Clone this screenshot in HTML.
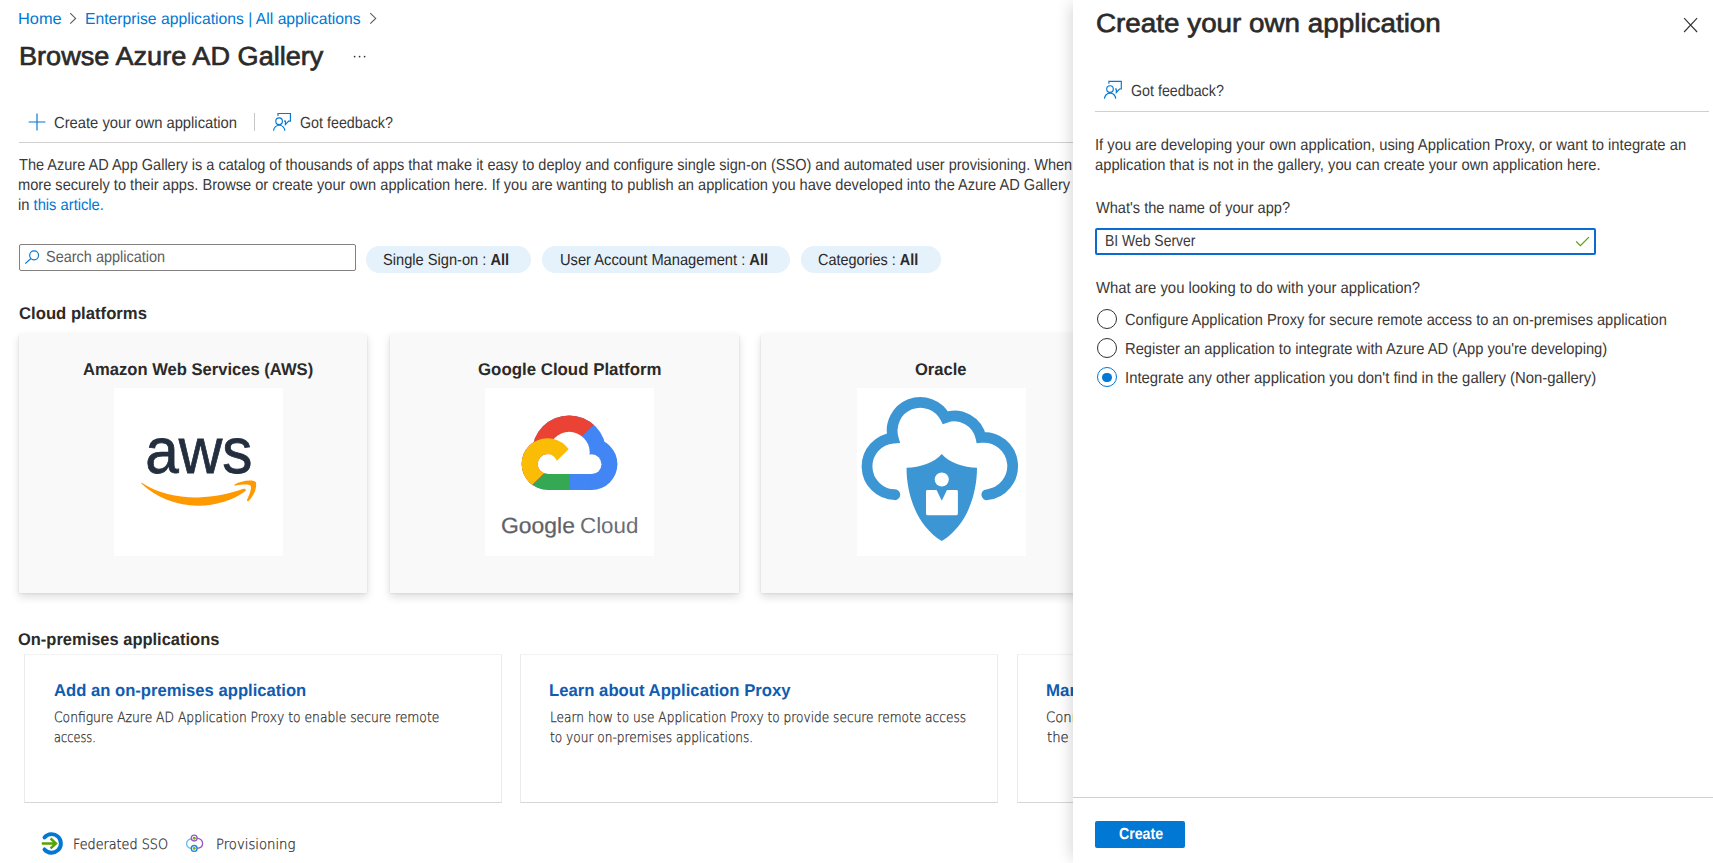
<!DOCTYPE html>
<html lang="en">
<head>
<meta charset="utf-8">
<title>Browse Azure AD Gallery - Microsoft Azure</title>
<style>
*{box-sizing:border-box;margin:0;padding:0}
html,body{width:1713px;height:863px;overflow:hidden;background:#fff}
body{font-family:"Liberation Sans",sans-serif;color:#323130;position:relative}
.t{position:absolute;display:block;height:0;line-height:0;white-space:nowrap;transform-origin:0 0;text-rendering:geometricPrecision;font-weight:400;text-decoration:none}
.t b{font-weight:700}
.abs{position:absolute}
#main{position:absolute;left:0;top:0;width:1713px;height:863px;overflow:hidden}
#panel{position:absolute;left:1073px;top:0;width:640px;height:863px;background:#fff;box-shadow:-6px 0 14px -4px rgba(0,0,0,.16)}
#pwrap{position:absolute;left:-1073px;top:0;width:1713px;height:863px}
.hr{position:absolute;height:1px;background:#d2d0ce}
.pill{position:absolute;top:246px;height:27px;border-radius:13.5px;background:#e5f1fb}
.card{position:absolute;top:334px;height:259px;background:#f9f9f9;box-shadow:0 3.84px 8.64px rgba(0,0,0,.132),0 .72px 2.16px rgba(0,0,0,.108)}
.img{position:absolute;top:54px;width:169px;height:168px;background:#fff}
.ocard{position:absolute;top:654px;height:149px;width:478px;background:#fff;border:1px solid #ebebeb;border-top-color:#f3f3f3;border-bottom-color:#d6d6d6}
svg{position:absolute;overflow:visible}
</style>
</head>
<body>
<div id="main">
  <!-- breadcrumb chevrons -->
  <svg style="left:68px;top:12px" width="10" height="14" viewBox="68 12 10 14"><path d="M70.2 13.1 L75.6 18.4 L70.2 23.7" fill="none" stroke="#605e5c" stroke-width="1.15"/></svg>
  <svg style="left:368px;top:12px" width="10" height="14" viewBox="368 12 10 14"><path d="M370.3 13.1 L375.7 18.4 L370.3 23.7" fill="none" stroke="#605e5c" stroke-width="1.15"/></svg>
  <!-- ellipsis -->
  <svg style="left:352px;top:52px" width="16" height="8" viewBox="352 52 16 8"><g fill="#323130"><circle cx="354.6" cy="56.6" r="0.85"/><circle cx="359.6" cy="56.6" r="0.85"/><circle cx="364.6" cy="56.6" r="0.85"/></g></svg>
  <!-- toolbar -->
  <svg style="left:28px;top:113px" width="18" height="18" viewBox="0 0 18 18"><path d="M9 0.6 V17.4 M0.6 9 H17.4" fill="none" stroke="#0078d4" stroke-width="1.15"/></svg>
  <div class="abs" style="left:254px;top:113px;width:1px;height:18px;background:#c8c6c4"></div>
  <svg style="left:272px;top:112px" width="20" height="20" viewBox="272 112 20 20"><g fill="none" stroke="#0078d4" stroke-width="1.15"><path d="M278 115.9 V113.5 H290.4 V121.1 H288.6 L285.4 124.6 V121.1 H284"/><circle cx="279.1" cy="121.2" r="3.3"/><path d="M273.6 130.8 A5.6 5.6 0 0 1 284.8 130.8"/></g></svg>
  <div class="hr" style="left:19px;top:142px;width:1694px"></div>
  <!-- search -->
  <div class="abs" style="left:19px;top:244px;width:337px;height:27px;border:1px solid #83817f;border-radius:2px;background:#fff"></div>
  <svg style="left:24px;top:249px" width="18" height="18" viewBox="24 249 18 18"><g fill="none" stroke="#0078d4" stroke-width="1.15"><circle cx="34.1" cy="255.35" r="4.45"/><path d="M30.9 258.5 L25.2 263.7"/></g></svg>
  <!-- pills -->
  <div class="pill" style="left:366px;width:165px"></div>
  <div class="pill" style="left:542px;width:248px"></div>
  <div class="pill" style="left:801px;width:140px"></div>
  <!-- cloud cards -->
  <div class="card" style="left:19px;width:348px"><div class="img" style="left:95px"></div></div>
  <div class="card" style="left:390px;width:349px"><div class="img" style="left:95px"></div></div>
  <div class="card" style="left:761px;width:349px"><div class="img" style="left:96px"></div></div>
  <!-- AWS logo -->
  <svg style="left:110px;top:420px" width="180" height="100" viewBox="0 0 1553 863">
    <text x="766" y="456" text-anchor="middle" font-family="Liberation Sans, sans-serif" font-size="560" fill="#232f3e" stroke="#232f3e" stroke-width="7" textLength="925" lengthAdjust="spacingAndGlyphs">aws</text>
    <path d="M270 540 C420 640 600 672 760 668 C900 664 1040 636 1150 594 C1172 588 1180 606 1164 618 C1050 700 900 742 760 740 C560 738 390 660 270 548 Z" fill="#ff9900"/>
    <path d="M1075 556 C1130 528 1220 508 1258 536 C1272 580 1240 660 1196 698 C1186 704 1178 698 1184 686 C1204 640 1226 590 1212 566 C1190 552 1130 558 1086 566 C1074 568 1068 562 1075 556 Z" fill="#ff9900"/>
  </svg>
  <!-- Google Cloud logo -->
  <svg style="left:515px;top:410px" width="110" height="85" viewBox="0 0 1117 863">
    <clipPath id="gUL"><polygon points="1422,-455 -444,1360 -444,-455"/></clipPath>
    <clipPath id="gGR"><polygon points="552,391.2 552,1360 -444,1360"/></clipPath>
    <g fill="#4285f4"><circle cx="550" cy="431" r="376"/><circle cx="330" cy="548" r="262"/><circle cx="778" cy="550" r="262"/><rect x="330" y="548" width="448" height="264"/></g>
    <g fill="#34a853" clip-path="url(#gGR)"><circle cx="550" cy="431" r="376"/><circle cx="330" cy="548" r="262"/><circle cx="778" cy="550" r="262"/><rect x="330" y="548" width="448" height="264"/></g>
    <g fill="#ea4335" clip-path="url(#gUL)"><circle cx="550" cy="431" r="376"/><circle cx="330" cy="548" r="262"/><circle cx="778" cy="550" r="262"/><rect x="330" y="548" width="448" height="264"/></g>
    <g fill="#fff"><circle cx="550" cy="431" r="209"/><circle cx="330" cy="548" r="100"/><circle cx="778" cy="550" r="100"/><rect x="330" y="548" width="448" height="102"/></g>
    <g clip-path="url(#gUL)"><circle cx="330" cy="548" r="181" fill="none" stroke="#fbbc05" stroke-width="162"/></g>
  </svg>
  <!-- Oracle logo -->
  <svg style="left:855px;top:390px" width="170" height="160" viewBox="0 0 917 863">
    <path d="M215 565 A153 153 0 0 1 206 259.5 A152 152 0 0 1 487.5 149 A146 146 0 0 1 679 256 A154 154 0 1 1 711 565" fill="none" stroke="#3c96d3" stroke-width="58" stroke-linecap="round" stroke-linejoin="miter" stroke-miterlimit="10"/>
    <path d="M468 345 C430 390 350 418 278 420 C278 560 330 730 468 815 C606 730 658 560 658 420 C586 418 506 390 468 345 Z" fill="#3c96d3"/>
    <circle cx="468" cy="483" r="38" fill="#fff"/>
    <path d="M391 540 H440 L468 598 L496 540 H547 Q555 540 555 548 V667 Q555 675 547 675 H391 Q383 675 383 667 V548 Q383 540 391 540 Z" fill="#fff"/>
  </svg>
  <!-- on-prem cards -->
  <div class="ocard" style="left:24px"></div>
  <div class="ocard" style="left:520px"></div>
  <div class="ocard" style="left:1017px"></div>
  <!-- legend icons -->
  <svg style="left:40px;top:831px" width="24" height="24" viewBox="40 831 24 24">
    <path d="M44.48 837.42 A9.3 9.3 0 1 1 44.48 849.38" fill="none" stroke="#0078d4" stroke-width="3.9" stroke-linecap="round"/>
    <path d="M41.8 843.4 H55.6 M50.6 838.5 L55.9 843.4 L50.6 848.3" fill="none" stroke="#57a300" stroke-width="2.5" stroke-linejoin="miter"/>
  </svg>
  <svg style="left:184px;top:833px" width="22" height="22" viewBox="184 833 22 22">
    <g fill="none" stroke-width="1.35">
      <path d="M191.6 838.6 C188.2 839.4 186.6 841.2 186.6 843.6 C186.6 846.4 188.6 848.2 191.4 848.6" stroke="#69bdf0"/>
      <path d="M196.9 838.2 C200.4 838.8 202.6 840.6 202.6 843.4 C202.6 846.4 200.4 848 197 848.4" stroke="#9b59c0"/>
      <circle cx="194.2" cy="838.1" r="2.9" stroke="#9b59c0"/>
      <circle cx="194.2" cy="848.4" r="2.9" stroke="#1a86d9"/>
    </g>
    <circle cx="194.3" cy="838.2" r="1.45" fill="#6bb700"/>
    <circle cx="194.3" cy="848.4" r="1.45" fill="#6bb700"/>
  </svg>
<a class="t" style="left:17.78px;top:20px;color:#0078d4;font-size:16px;transform:scaleX(1.0216);">Home</a>
<a class="t" style="left:85.12px;top:20px;color:#0078d4;font-size:16px;transform:scaleX(0.9815);">Enterprise applications | All applications</a>
<h1 class="t" style="left:18.70px;top:56px;color:#2b2a29;font-size:26.2px;-webkit-text-stroke:0.65px currentColor;transform:scaleX(1.0355);">Browse Azure AD Gallery</h1>
<span class="t" style="left:53.96px;top:124px;color:#3a3938;font-size:16px;transform:scaleX(0.9229);">Create your own application</span>
<span class="t" style="left:299.78px;top:124px;color:#3a3938;font-size:16px;transform:scaleX(0.8926);">Got feedback?</span>
<p class="t" style="left:18.99px;top:166px;color:#3a3938;font-size:16px;transform:scaleX(0.9081);">The Azure AD App Gallery is a catalog of thousands of apps that make it easy to deploy and configure single sign-on (SSO) and automated user provisioning. When deploying an app from the App Gallery, you leverage prebuilt templates to connect your users</p>
<p class="t" style="left:18.25px;top:186px;color:#3a3938;font-size:16px;transform:scaleX(0.9135);">more securely to their apps. Browse or create your own application here. If you are wanting to publish an application you have developed into the Azure AD Gallery for other organizations to discover and use, you can file a request using the process described</p>
<p class="t" style="left:18.23px;top:206px;color:#3a3938;font-size:16px;transform:scaleX(0.9199);">in <span style="color:#0078d4">this article.</span></p>
<span class="t" style="left:46.09px;top:258px;color:#605e5c;font-size:16px;transform:scaleX(0.9046);">Search application</span>
<span class="t" style="left:383.00px;top:261px;color:#2b2a29;font-size:16px;transform:scaleX(0.9153);">Single Sign-on : <b>All</b></span>
<span class="t" style="left:559.66px;top:261px;color:#2b2a29;font-size:16px;transform:scaleX(0.9176);">User Account Management : <b>All</b></span>
<span class="t" style="left:818.48px;top:261px;color:#2b2a29;font-size:16px;transform:scaleX(0.9025);">Categories : <b>All</b></span>
<h2 class="t" style="left:18.90px;top:314px;color:#2b2a29;font-size:17px;font-weight:700;transform:scaleX(0.9819);">Cloud platforms</h2>
<h3 class="t" style="left:83.24px;top:370px;color:#2b2a29;font-size:17px;font-weight:700;transform:scaleX(0.9759);">Amazon Web Services (AWS)</h3>
<h3 class="t" style="left:478.00px;top:370px;color:#2b2a29;font-size:17px;font-weight:700;transform:scaleX(0.9913);">Google Cloud Platform</h3>
<h3 class="t" style="left:915.31px;top:370px;color:#2b2a29;font-size:17px;font-weight:700;transform:scaleX(0.9735);">Oracle</h3>
<span class="t" style="left:501.09px;top:526px;color:#5f6368;font-size:22px;-webkit-text-stroke:0.25px currentColor;transform:scaleX(1.0414);">Google</span>
<span class="t" style="left:580.04px;top:526px;color:#6a6e73;font-size:22px;transform:scaleX(1.0157);">Cloud</span>
<h2 class="t" style="left:18.41px;top:640px;color:#2b2a29;font-size:17px;font-weight:700;transform:scaleX(0.9688);">On-premises applications</h2>
<a class="t" style="left:54.11px;top:691px;color:#0f5cb0;font-size:17px;font-weight:700;transform:scaleX(0.9783);">Add an on-premises application</a>
<p class="t" style="left:53.97px;top:718px;color:#323130;font-size:14.2px;font-family:'DejaVu Sans Light','DejaVu Sans',sans-serif;font-weight:200;-webkit-text-stroke:0.3px currentColor;transform:scaleX(0.8677);">Configure Azure AD Application Proxy to enable secure remote</p>
<p class="t" style="left:54.44px;top:738px;color:#323130;font-size:14.2px;font-family:'DejaVu Sans Light','DejaVu Sans',sans-serif;font-weight:200;-webkit-text-stroke:0.3px currentColor;transform:scaleX(0.7995);">access.</p>
<a class="t" style="left:549.27px;top:691px;color:#0f5cb0;font-size:17px;font-weight:700;transform:scaleX(0.9824);">Learn about Application Proxy</a>
<p class="t" style="left:549.58px;top:718px;color:#323130;font-size:14.2px;font-family:'DejaVu Sans Light','DejaVu Sans',sans-serif;font-weight:200;-webkit-text-stroke:0.3px currentColor;transform:scaleX(0.8579);">Learn how to use Application Proxy to provide secure remote access</p>
<p class="t" style="left:550.46px;top:738px;color:#323130;font-size:14.2px;font-family:'DejaVu Sans Light','DejaVu Sans',sans-serif;font-weight:200;-webkit-text-stroke:0.3px currentColor;transform:scaleX(0.8569);">to your on-premises applications.</p>
<a class="t" style="left:1045.97px;top:691px;color:#0f5cb0;font-size:17px;font-weight:700;transform:scaleX(0.9900);">Manage Application Proxy connectors</a>
<p class="t" style="left:1046.38px;top:718px;color:#323130;font-size:14.2px;font-family:'DejaVu Sans Light','DejaVu Sans',sans-serif;font-weight:200;-webkit-text-stroke:0.3px currentColor;transform:scaleX(0.9300);">Connectors are lightweight agents that sit on-premises and facilitate</p>
<p class="t" style="left:1047.13px;top:738px;color:#323130;font-size:14.2px;font-family:'DejaVu Sans Light','DejaVu Sans',sans-serif;font-weight:200;-webkit-text-stroke:0.3px currentColor;transform:scaleX(0.9300);">the outbound connection to the Application Proxy service.</p>
<span class="t" style="left:73.30px;top:845px;color:#323130;font-size:14.2px;font-family:'DejaVu Sans Light','DejaVu Sans',sans-serif;font-weight:200;-webkit-text-stroke:0.3px currentColor;transform:scaleX(0.9014);">Federated SSO</span>
<span class="t" style="left:215.89px;top:845px;color:#323130;font-size:14.2px;font-family:'DejaVu Sans Light','DejaVu Sans',sans-serif;font-weight:200;-webkit-text-stroke:0.3px currentColor;transform:scaleX(0.9310);">Provisioning</span>
</div>
<div id="panel"><div id="pwrap">
  <!-- close -->
  <svg style="left:1683px;top:17px" width="16" height="16" viewBox="1683 17 16 16"><path d="M1684.1 18.2 L1697.1 32 M1697.1 18.2 L1684.1 32" fill="none" stroke="#323130" stroke-width="1.1"/></svg>
  <svg style="left:1103px;top:80px" width="20" height="20" viewBox="272.1 112.1 20 20"><g fill="none" stroke="#0078d4" stroke-width="1.15"><path d="M278 115.9 V113.5 H290.4 V121.1 H288.6 L285.4 124.6 V121.1 H284"/><circle cx="279.1" cy="121.2" r="3.3"/><path d="M273.6 130.8 A5.6 5.6 0 0 1 284.8 130.8"/></g></svg>
  <div class="hr" style="left:1095px;top:111px;width:614px"></div>
  <div class="abs" style="left:1095px;top:228px;width:501px;height:27px;border:2px solid #0a6cd0;border-radius:2px;background:#fff"></div>
  <svg style="left:1574px;top:234px" width="18" height="14" viewBox="1574 234 18 14"><path d="M1576.1 241.4 L1580.4 245.6 L1588.9 237.1" fill="none" stroke="#57a300" stroke-width="1.3"/></svg>
  <!-- radios -->
  <div class="abs" style="left:1097px;top:309px;width:20px;height:20px;border:1.2px solid #323130;border-radius:50%"></div>
  <div class="abs" style="left:1097px;top:338px;width:20px;height:20px;border:1.2px solid #323130;border-radius:50%"></div>
  <div class="abs" style="left:1097px;top:367px;width:20px;height:20px;border:1.2px solid #0078d4;border-radius:50%"></div>
  <div class="abs" style="left:1102.4px;top:372.6px;width:9.2px;height:9.2px;background:#0078d4;border-radius:50%"></div>
  <!-- footer -->
  <div class="hr" style="left:1073px;top:797px;width:640px"></div>
  <div class="abs" style="left:1095px;top:821px;width:90px;height:27px;background:#0078d4;border-radius:2px"></div>
<h2 class="t" style="left:1095.88px;top:23px;color:#2b2a29;font-size:26.2px;-webkit-text-stroke:0.65px currentColor;transform:scaleX(1.0622);">Create your own application</h2>
<span class="t" style="left:1131.28px;top:92px;color:#3a3938;font-size:16px;transform:scaleX(0.8919);">Got feedback?</span>
<p class="t" style="left:1094.54px;top:146px;color:#3a3938;font-size:16px;transform:scaleX(0.9235);">If you are developing your own application, using Application Proxy, or want to integrate an</p>
<p class="t" style="left:1095.24px;top:166px;color:#3a3938;font-size:16px;transform:scaleX(0.9204);">application that is not in the gallery, you can create your own application here.</p>
<label class="t" style="left:1095.69px;top:209px;color:#3a3938;font-size:16px;transform:scaleX(0.9112);">What's the name of your app?</label>
<span class="t" style="left:1104.87px;top:242px;color:#3a3938;font-size:16px;transform:scaleX(0.8715);">BI Web Server</span>
<label class="t" style="left:1095.69px;top:289px;color:#3a3938;font-size:16px;transform:scaleX(0.9291);">What are you looking to do with your application?</label>
<label class="t" style="left:1125.28px;top:321px;color:#3a3938;font-size:16px;transform:scaleX(0.9119);">Configure Application Proxy for secure remote access to an on-premises application</label>
<label class="t" style="left:1124.79px;top:350px;color:#3a3938;font-size:16px;transform:scaleX(0.9198);">Register an application to integrate with Azure AD (App you're developing)</label>
<label class="t" style="left:1124.64px;top:379px;color:#3a3938;font-size:16px;transform:scaleX(0.9302);">Integrate any other application you don't find in the gallery (Non-gallery)</label>
<span class="t" style="left:1118.51px;top:835px;color:#ffffff;font-size:16px;font-weight:700;transform:scaleX(0.8852);">Create</span>
</div></div>
</body>
</html>
